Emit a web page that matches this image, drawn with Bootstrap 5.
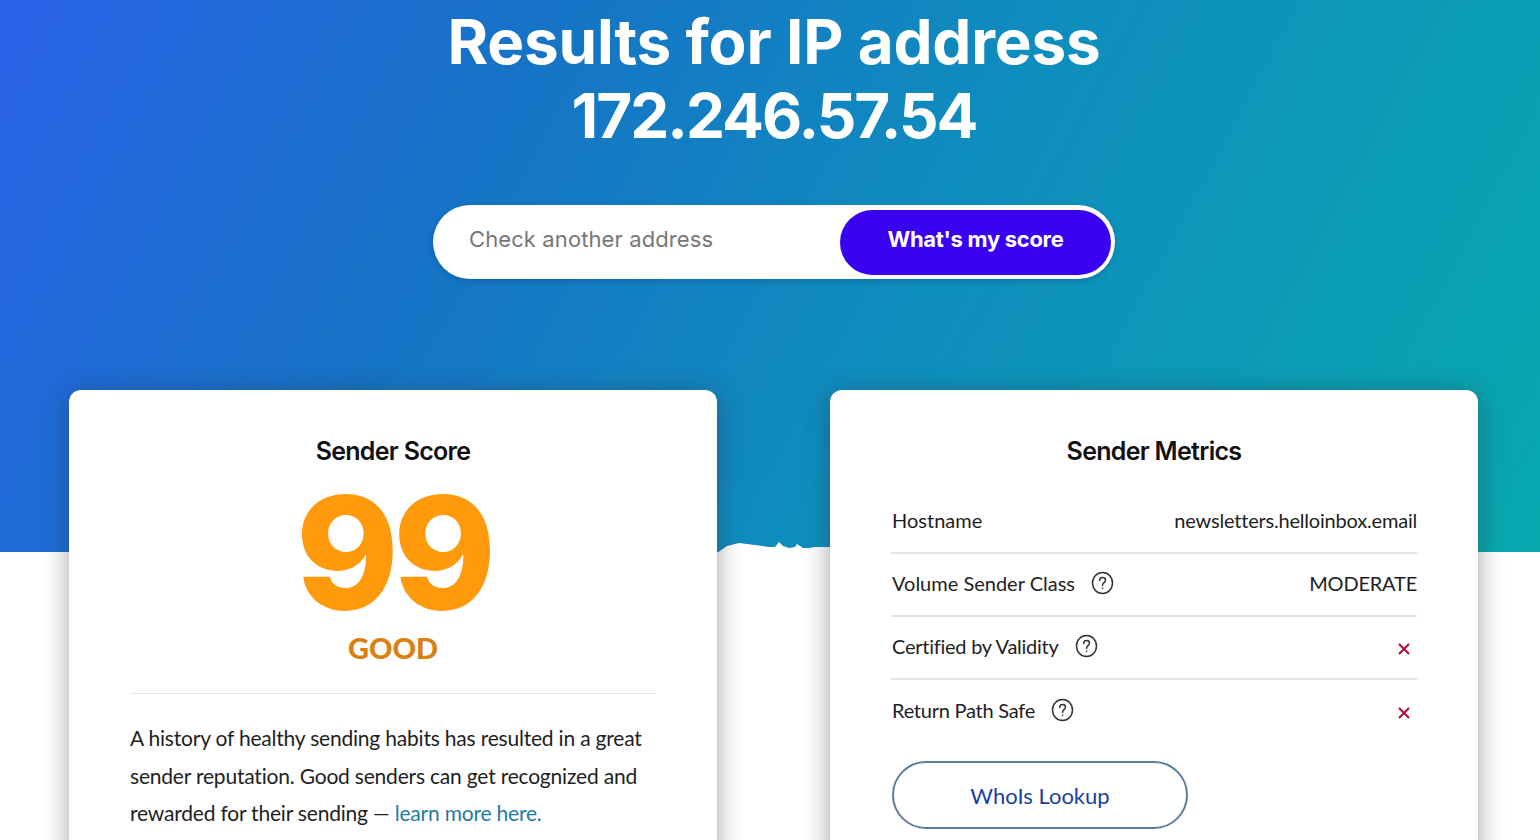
<!DOCTYPE html>
<html lang="en">
<head>
  <meta charset="UTF-8" />
  <title>Sender Score Results</title>
  <link href="https://cdn.jsdelivr.net/npm/bootstrap@5.3.3/dist/css/bootstrap.min.css" rel="stylesheet" />
  <style>
    html, body {
      height: 840px;
      overflow: hidden;
    }

    body {
      font-family: 'Lato', 'Liberation Sans', sans-serif;
      color: #1b1b1f;
      background-color: #fff;
    }

    .page-wrap {
      height: 840px;
      overflow: hidden;
      position: relative;
      background-image: linear-gradient(118deg, #2a62e8 0%, #1673c6 30%, #0f8dbe 58%, #07a9ae 100%);
      background-size: 100% 552px;
      background-repeat: no-repeat;
    }

    .hero-block {
      padding-left: 8px;
    }

    .hero-title {
      font-family: 'Inter', 'Liberation Sans', sans-serif;
      font-size: 62px;
      font-weight: 700;
      line-height: 74px;
      letter-spacing: -2px;
      color: #fff;
      padding-top: 5px;
      margin-bottom: 0;
      text-align: center;
    }

    .title-words {
      letter-spacing: -0.2px;
    }

    .search-pill {
      width: 682px;
      height: 74px;
      margin: 52px auto 0;
      padding: 4px;
      background-color: #fff;
      border-radius: 37px;
      box-shadow: 0 2px 6px rgba(0, 40, 90, 0.25);
    }

    .search-pill .form-control {
      padding: 0 0 5px 32px;
      font-family: 'Inter', 'Liberation Sans', sans-serif;
      font-size: 22px;
      letter-spacing: 0.1px;
      color: #555;
      background: transparent;
      box-shadow: none;
    }

    .search-pill .form-control::placeholder {
      color: #777;
      opacity: 1;
    }

    .score-btn {
      flex: 0 0 271px;
      height: 65px;
      padding-bottom: 12px;
      font-family: 'Inter', 'Liberation Sans', sans-serif;
      font-size: 22px;
      font-weight: 700;
      letter-spacing: -0.3px;
      color: #fff;
      background-color: #3a00f0;
      border: none;
      border-radius: 33px;
    }

    .score-btn:hover {
      color: #fff;
      background-color: #3200d0;
    }

    .card-row {
      padding: 0 62px 0 69px;
      margin-top: 111px;
    }

    .info-card {
      width: 648px;
      height: 520px;
      padding: 44px 61px 0 61px;
      border: none;
      border-radius: 12px;
      background-color: #fff;
      box-shadow: 0 4px 26px rgba(40, 50, 60, 0.46);
    }

    .card-heading {
      font-family: 'Inter', 'Liberation Sans', sans-serif;
      font-size: 25px;
      font-weight: 600;
      line-height: 34px;
      letter-spacing: -0.7px;
      color: #111;
      text-align: center;
      margin-bottom: 0;
    }

    .score-num {
      font-family: 'Inter', 'Liberation Sans', sans-serif;
      font-size: 156px;
      font-weight: 800;
      line-height: 130px;
      color: #ff9a0d;
      text-align: center;
      margin-top: 20px;
      letter-spacing: -6px;
    }

    .score-word {
      font-size: 29px;
      font-weight: 900;
      line-height: 36px;
      color: #d9800f;
      text-align: center;
      margin-top: 12px;
    }

    .score-rule {
      margin: 27px 5px 25px;
      border: 0;
      border-top: 1px solid #e6e6e6;
      opacity: 1;
    }

    .score-text {
      font-size: 21px;
      line-height: 37.5px;
      letter-spacing: -0.2px;
      color: #1e1e22;
      margin-bottom: 0;
    }

    .score-text a {
      color: #1f7ba3;
      text-decoration: none;
    }

    .metric-list {
      margin-top: 23px;
    }

    .metric-list .list-group-item {
      height: 63px;
      padding: 0 0 4px 1px;
      font-size: 20px;
      color: #1e1e22;
      background: transparent;
      border: 0;
      border-bottom: 2px solid #e4e4e4;
    }

    .metric-value {
      letter-spacing: -0.2px;
    }

    .tight-label {
      letter-spacing: -0.25px;
    }

    .help-icon {
      width: 23px;
      height: 24px;
      margin-left: 16px;
    }

    .cross-icon {
      width: 14px;
      height: 14px;
      margin-right: 6px;
      margin-top: 6px;
    }

    .whois-btn {
      width: 296px;
      height: 68px;
      margin-top: 18px;
      margin-left: 1px;
      font-size: 22px;
      color: #1a3fa0;
      background-color: #fff;
      border: 2px solid #5f7d9e;
      border-radius: 34px;
    }

    .whois-btn:hover {
      color: #1a3fa0;
      background-color: #f4f7fa;
    }

    .torn-edge {
      position: absolute;
      left: 717px;
      top: 536px;
      width: 114px;
      height: 20px;
    }
  </style>
</head>
<body>
  <div class="page-wrap">
    <div class="hero-block">
      <h1 class="hero-title"><span class="title-words">Results for IP address</span><br />172.246.57.54</h1>

      <form class="search-pill d-flex align-items-center">
        <input type="text" class="form-control border-0" placeholder="Check another address" />
        <button type="button" class="btn score-btn">What's my score</button>
      </form>
    </div>

    <svg class="torn-edge" viewBox="0 0 114 20">
      <path d="M0 17 L10 10 L22 7 L38 9 L52 11 L58 11 L62 6 L66 10 L72 12 L78 11 L80 8 L86 12 L92 12 L98 11 L114 11 L114 20 L0 20 Z" fill="#fff" />
    </svg>

    <div class="card-row d-flex justify-content-between">
      <div class="card info-card">
        <h2 class="card-heading">Sender Score</h2>
        <div class="score-num">99</div>
        <div class="score-word">GOOD</div>
        <hr class="score-rule" />
        <p class="score-text">A history of healthy sending habits has resulted in a great sender reputation. Good senders can get recognized and rewarded for their sending — <a href="#">learn more here.</a></p>
      </div>

      <div class="card info-card">
        <h2 class="card-heading">Sender Metrics</h2>
        <ul class="list-group list-group-flush metric-list">
          <li class="list-group-item d-flex align-items-center justify-content-between">
            <span>Hostname</span>
            <span class="metric-value">newsletters.helloinbox.email</span>
          </li>
          <li class="list-group-item d-flex align-items-center justify-content-between">
            <span class="d-flex align-items-center">Volume Sender Class
              <svg class="help-icon" viewBox="0 0 23 24" fill="none" stroke="#333" stroke-width="1.5" stroke-linecap="round"><ellipse cx="11.5" cy="12" rx="10" ry="10.5" /><path d="M8.6 9.4c.2-1.8 1.4-2.8 3-2.8 1.700 0 2.900 1.100 2.900 2.600 0 1.300-.8 2-1.700 2.700-.8.6-1.200 1.200-1.200 2.300" /><path d="M11.600 17.300v.3" /></svg>
            </span>
            <span class="metric-value">MODERATE</span>
          </li>
          <li class="list-group-item d-flex align-items-center justify-content-between">
            <span class="d-flex align-items-center tight-label">Certified by Validity
              <svg class="help-icon" viewBox="0 0 23 24" fill="none" stroke="#333" stroke-width="1.5" stroke-linecap="round"><ellipse cx="11.5" cy="12" rx="10" ry="10.5" /><path d="M8.6 9.4c.2-1.8 1.4-2.8 3-2.8 1.700 0 2.900 1.100 2.900 2.600 0 1.300-.8 2-1.700 2.700-.8.6-1.200 1.200-1.200 2.300" /><path d="M11.600 17.300v.3" /></svg>
            </span>
            <svg class="cross-icon" viewBox="0 0 14 14" stroke="#b5113a" stroke-width="2.200"><path d="M2 2l10 10M12 2L2 12" /></svg>
          </li>
          <li class="list-group-item d-flex align-items-center justify-content-between">
            <span class="d-flex align-items-center tight-label">Return Path Safe
              <svg class="help-icon" viewBox="0 0 23 24" fill="none" stroke="#333" stroke-width="1.5" stroke-linecap="round"><ellipse cx="11.5" cy="12" rx="10" ry="10.5" /><path d="M8.6 9.4c.2-1.8 1.4-2.8 3-2.8 1.700 0 2.900 1.100 2.900 2.600 0 1.300-.8 2-1.700 2.700-.8.6-1.200 1.200-1.200 2.300" /><path d="M11.600 17.300v.3" /></svg>
            </span>
            <svg class="cross-icon" viewBox="0 0 14 14" stroke="#b5113a" stroke-width="2.200"><path d="M2 2l10 10M12 2L2 12" /></svg>
          </li>
        </ul>
        <button type="button" class="btn whois-btn">WhoIs Lookup</button>
      </div>
    </div>
  </div>

  <script src="https://cdn.jsdelivr.net/npm/bootstrap@5.3.3/dist/js/bootstrap.bundle.min.js"></script>
</body>
</html>
